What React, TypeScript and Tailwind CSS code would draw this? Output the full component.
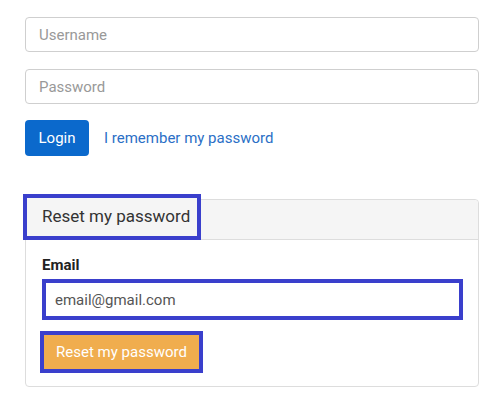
import React from "react";

const App: React.FC = () => {
  return (
    <div className="w-[500px] h-[404px] bg-white pt-[17px] px-[25px] text-[#333] font-['Roboto','Liberation_Sans',sans-serif]">
      <input
        type="text"
        placeholder="Username"
        className="block w-[454px] h-[35px] px-[13px] border border-[#cfcfcf] rounded-[4px] text-[15px] placeholder:text-[#999] outline-none"
      />
      <input
        type="password"
        placeholder="Password"
        className="block mt-[17px] w-[454px] h-[35px] px-[13px] border border-[#cfcfcf] rounded-[4px] text-[15px] placeholder:text-[#999] outline-none"
      />

      <div className="mt-[16px] flex items-center">
        <button className="w-[64px] h-[36px] rounded-[4px] bg-[#0b69cc] text-white text-[15px]">
          Login
        </button>
        <a href="#" className="ml-[15px] text-[15px] text-[#2b6fc6]">
          I remember my password
        </a>
      </div>

      <div className="mt-[43px] w-[454px] border border-[#dddddd] rounded-[4px]">
        <div className="flex h-[40px] bg-[#f5f5f5] border-b border-[#dddddd] rounded-t-[4px]">
          <div className="-mt-[6px] -ml-[3px] w-[178px] h-[46px] border-4 border-[#3a3fcc] bg-[#f5f5f5] pl-[15px] flex items-center text-[17px] text-[#333]">
            Reset my password
          </div>
        </div>
        <div className="px-[16px] pt-[15px] pb-[13px]">
          <label className="block text-[15px] font-bold text-[#222] leading-[20px]">Email</label>
          <input
            type="email"
            placeholder="email@gmail.com"
            className="block mt-[4px] w-[421px] h-[41px] px-[9px] border-4 border-[#3a3fcc] text-[15px] placeholder:text-[#555] outline-none"
          />
          <button className="block mt-[11px] -ml-[2px] w-[163px] h-[42px] border-4 border-[#3a3fcc] bg-[#f0ad4e] text-white text-[15px]">
            Reset my password
          </button>
        </div>
      </div>
    </div>
  );
};

export default App;
